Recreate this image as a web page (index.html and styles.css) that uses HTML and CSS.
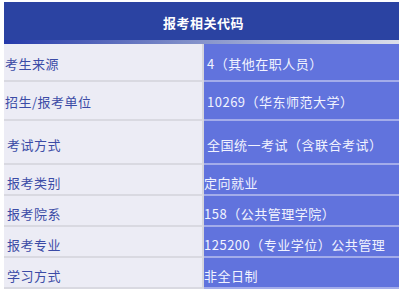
FILE: index.html
```html
<!DOCTYPE html>
<html lang="zh">
<head>
<meta charset="utf-8">
<link rel="stylesheet" href="styles.css">
</head>
<body>
<div class="table">
  <div class="head">报考相关代码</div>
  <div class="band"></div>
  <div class="row r1"><div class="k">考生来源</div><div class="v">4（其他在职人员）</div></div>
  <div class="row r2"><div class="k">招生/报考单位</div><div class="v">10269（华东师范大学）</div></div>
  <div class="row r3"><div class="k">考试方式</div><div class="v">全国统一考试（含联合考试）</div></div>
  <div class="row r4"><div class="k">报考类别</div><div class="v">定向就业</div></div>
  <div class="row r4"><div class="k">报考院系</div><div class="v">158（公共管理学院）</div></div>
  <div class="row r4"><div class="k">报考专业</div><div class="v">125200（专业学位）公共管理</div></div>
  <div class="row r4"><div class="k">学习方式</div><div class="v">非全日制</div></div>
</div>
</body>
</html>
```
FILE: styles.css
```css
* { box-sizing: border-box; }
html, body { margin: 0; padding: 0; background: #ffffff; }
body {
  font-family: "Noto Sans CJK SC", "Noto Sans", sans-serif;
  font-size: 13px;
  letter-spacing: 0.5px;
}
.table {
  margin: 2px 0 0 4px;
  width: 395px;
}
.head {
  height: 38px;
  background: #2b43a2;
  color: #ffffff;
  font-weight: bold;
  display: flex;
  align-items: center;
  justify-content: center;
  padding-left: 4px;
  padding-top: 2px;
}
.band {
  height: 4px;
  background: linear-gradient(to right, #2438aa 0%, #7d8cc8 45%, #dcdfea 100%);
}
.row {
  display: grid;
  grid-template-columns: 200px 195px;
}
.k, .v {
  display: flex;
  align-items: center;
  border-bottom: 2px solid;
}
.k {
  background: #ececf5;
  color: #3b4ba6;
  border-bottom-color: #d9d9e1;
  border-right: 2px solid #d6d6de;
}
.v {
  background: #6173dd;
  color: #f2f3ff;
  border-bottom-color: #a3acea;
}
.r1 { height: 38px; }
.r2 { height: 39px; }
.r3 { height: 44px; }
.r4 { height: 31px; }
.r1 .k, .r2 .k { padding-left: 1px; padding-top: 2px; }
.r1 .v, .r2 .v { padding-left: 3px; padding-top: 2px; }
.r3 .k { padding-left: 3px; padding-top: 4px; }
.r3 .v { padding-left: 3px; padding-top: 4px; }
.r4 .k { padding-left: 3px; padding-top: 5px; }
.r4 .v { padding-left: 0; padding-top: 5px; }
```
